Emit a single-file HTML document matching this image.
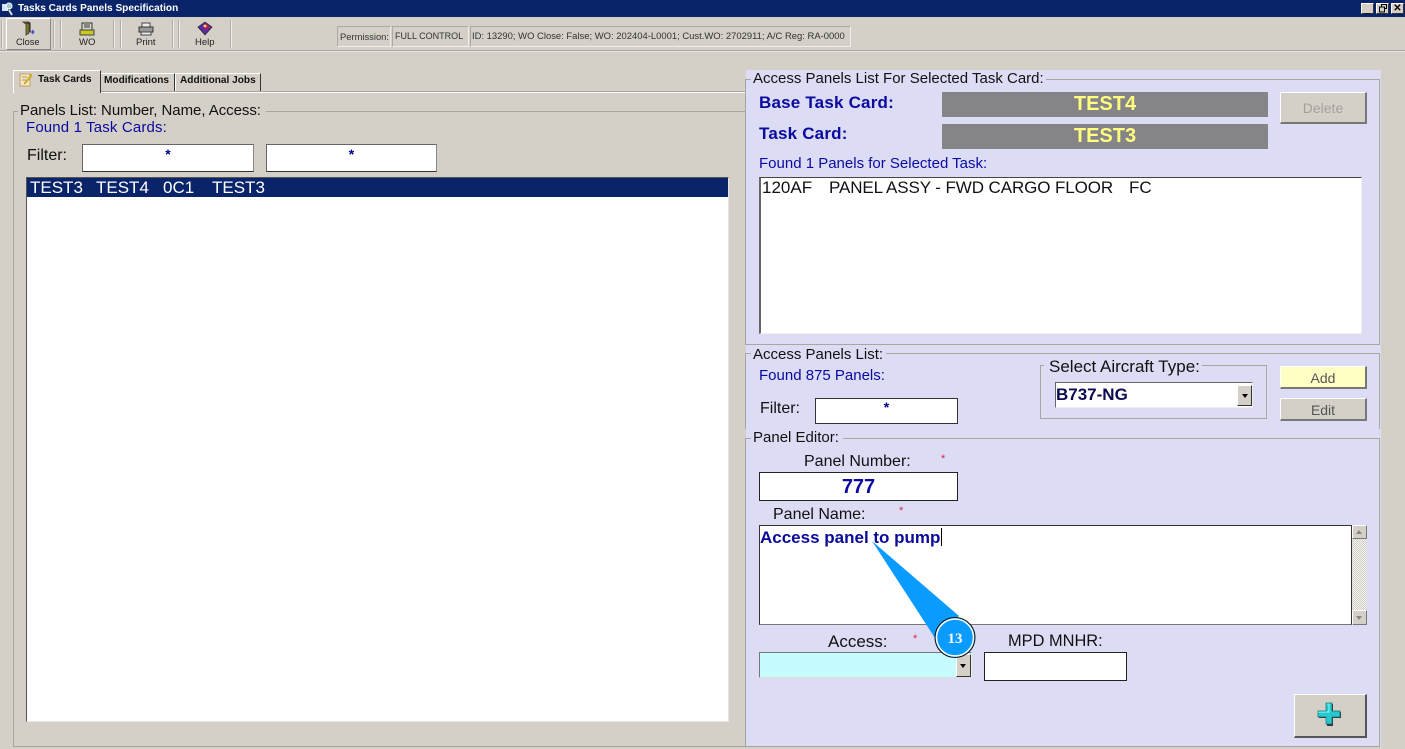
<!DOCTYPE html>
<html><head><meta charset="utf-8"><title>Tasks Cards Panels Specification</title>
<style>
html,body{margin:0;padding:0}
body{width:1405px;height:749px;overflow:hidden;position:relative;background:#d4d0c8;font-family:"Liberation Sans",sans-serif;color:#000}
div{position:absolute;box-sizing:border-box}
.t{white-space:nowrap;line-height:1}
.b{color:#0a0aa0}
.sm{font-size:9.5px;color:#222}
.box{background:#fff;border:1px solid #222;}
.in{background:#fff;border:1px solid #666;border-right-color:#888;border-bottom-color:#333;text-align:center;color:#00008b;font-weight:bold;font-size:14px;line-height:18px}
.btn{background:#d4d0c8;border-top:1px solid #fff;border-left:1px solid #fff;border-right:2px solid #777;border-bottom:2px solid #777;text-align:center;font-size:14px;color:#444}
.sep{width:1px;background:#b0ada6;border-right:1px solid #eeece6;box-sizing:content-box;top:20px;height:28px}
.ln{background:#a9a69f}
.gr{background:#858486;color:#ffff80;font-weight:bold;font-size:20px;text-align:center}
.cell{top:26px;height:21px;border:1px solid #f0eee8;border-top-color:#aaa;border-left-color:#aaa;font-size:9.5px;color:#333;line-height:19px;white-space:nowrap;padding-left:2px}
.win{top:3px;width:13px;height:11px;background:#d4d0c8;border-top:1px solid #fff;border-left:1px solid #fff;border-right:1px solid #333;border-bottom:1px solid #333;color:#000;font-size:10px;font-weight:bold;line-height:9px;text-align:center}
.red{color:#e02050;font-size:11px}
</style></head><body>

<!-- Title bar -->
<div style="left:0;top:0;width:1405px;height:17px;background:#0a246a"></div>
<svg style="position:absolute;left:1px;top:1px" width="14" height="15" viewBox="0 0 14 15"><rect x="1" y="3" width="6" height="7" fill="#d8e4f4"/><circle cx="8" cy="5" r="3" fill="#9cc" stroke="#fff"/><path d="M8 9l3 5" stroke="#ddd" stroke-width="2"/></svg>
<div class="t" style="left:18px;top:4px;font-size:10.1px;font-weight:bold;color:#fff">Tasks Cards Panels Specification</div>
<div class="win" style="left:1361px;line-height:11px">_</div>
<div class="win" style="left:1376px"><svg style="position:absolute;left:1px;top:0" width="10" height="9" viewBox="0 0 10 9"><path d="M3.500 2.500V.5h5v4H7M1.500 3h5v5h-5z" fill="none" stroke="#000"/><path d="M3 .5h6M1 3h6" stroke="#000"/></svg></div>
<div class="win" style="left:1391px">&#10005;</div>

<!-- Toolbar -->
<div style="left:0;top:50px;width:1405px;height:2px;background:#a9a69f;border-bottom:1px solid #e8e6e0"></div>
<div style="left:6px;top:18px;width:45px;height:32px;border-top:1px solid #fff;border-left:1px solid #fff;border-right:1px solid #888;border-bottom:1px solid #888"></div>
<div class="sep" style="left:1px"></div>
<div class="sep" style="left:53px"></div><div class="sep" style="left:60px"></div>
<div class="sep" style="left:113px"></div><div class="sep" style="left:120px"></div>
<div class="sep" style="left:172px"></div><div class="sep" style="left:178px"></div>
<div class="sep" style="left:230px"></div>

<svg style="position:absolute;left:21px;top:21px" width="14" height="15" viewBox="0 0 14 15"><path d="M2 1h6v11l-3 2V3z" fill="#8a7a20" stroke="#333" stroke-width=".8"/><path d="M5 2h4v9" fill="none" stroke="#222"/><path d="M9 11h4M11 9l2 2-2 2" stroke="#2040c0" fill="none"/></svg>
<div class="t sm" style="left:16px;top:38px;font-size:9.200px">Close</div>
<svg style="position:absolute;left:79px;top:21px" width="16" height="15" viewBox="0 0 16 15"><rect x="3" y="2" width="10" height="7" fill="#d8d8c8" stroke="#333"/><path d="M5 4h6M5 6h6" stroke="#333"/><rect x="1" y="9" width="14" height="5" fill="#c8c820" stroke="#444"/></svg>
<div class="t sm" style="left:79px;top:38px">WO</div>
<svg style="position:absolute;left:138px;top:21px" width="16" height="15" viewBox="0 0 16 15"><rect x="4" y="2" width="8" height="4" fill="#eee" stroke="#444"/><rect x="1" y="6" width="14" height="5" fill="#999" stroke="#333"/><rect x="3" y="11" width="10" height="3" fill="#eee" stroke="#444"/></svg>
<div class="t sm" style="left:136px;top:38px">Print</div>
<svg style="position:absolute;left:197px;top:21px" width="16" height="15" viewBox="0 0 16 15"><path d="M1 6l7-5 7 5-7 8z" fill="#5a2aa0" stroke="#222" stroke-width=".7"/><path d="M8 2l5 4-5 3z" fill="#c02040"/><circle cx="8" cy="5" r="1.400" fill="#ffe060"/></svg>
<div class="t sm" style="left:195px;top:38px">Help</div>

<div class="cell" style="left:337px;width:54px;font-size:9.400px">Permission:</div>
<div class="cell" style="left:392px;width:77px;font-size:9px">FULL CONTROL</div>
<div class="cell" style="left:470px;width:381px;font-size:9.450px;padding-left:1px">ID: 13290; WO Close: False; WO: 202404-L0001; Cust.WO: 2702911; A/C Reg: RA-0000</div>

<!-- Tabs -->
<div class="ln" style="left:13px;top:91px;width:733px;height:1px"></div>
<div style="left:13px;top:92px;width:733px;height:1px;background:#fff"></div>
<div style="left:13px;top:70px;width:88px;height:23px;background:#d4d0c8;border-top:1px solid #fff;border-left:1px solid #fff;border-right:1px solid #333"></div>
<div style="left:101px;top:73px;width:74px;height:18px;border-top:1px solid #fff;border-right:1px solid #333"></div>
<div style="left:175px;top:73px;width:86px;height:18px;border-top:1px solid #fff;border-left:1px solid #fff;border-right:1px solid #333"></div>
<svg style="position:absolute;left:19px;top:72px" width="14" height="15" viewBox="0 0 14 15"><path d="M1 2h10v12H1z" fill="#f4e8c0" stroke="#c0a060"/><path d="M3 5h5M3 8h4" stroke="#b09060"/><path d="M12 2L6 10l-1 2 2-1 6-7z" fill="#e8c020" stroke="#a08020" stroke-width=".5"/></svg>
<div class="t" style="left:38px;top:75px;font-size:10.100px;font-weight:bold;color:#111">Task Cards</div>
<div class="t" style="left:104px;top:76px;font-size:10.100px;font-weight:bold;color:#111">Modifications</div>
<div class="t" style="left:180px;top:76px;font-size:10.100px;font-weight:bold;color:#111">Additional Jobs</div>

<!-- Left group -->
<div class="ln" style="left:13px;top:111px;width:5px;height:1px"></div>
<div class="ln" style="left:266px;top:111px;width:479px;height:1px"></div>
<div class="ln" style="left:13px;top:111px;width:1px;height:636px"></div>
<div class="ln" style="left:13px;top:746px;width:733px;height:1px"></div>
<div class="t" style="left:20px;top:103px;font-size:15px;letter-spacing:-.05px;color:#111">Panels List: Number, Name, Access:</div>
<div class="t b" style="left:26px;top:120px;font-size:15px;letter-spacing:.15px">Found 1 Task Cards:</div>
<div class="t" style="left:27px;top:148px;font-size:16px;color:#111">Filter:</div>
<div class="in" style="left:82px;top:144px;width:172px;height:28px">*</div>
<div class="in" style="left:266px;top:144px;width:171px;height:28px">*</div>
<div style="left:26px;top:177px;width:703px;height:545px;background:#fff;border:1px solid #555;border-right-color:#e8e6e0;border-bottom-color:#e8e6e0"></div>
<div style="left:27px;top:178px;width:701px;height:19px;background:#0a246a"></div>
<div class="t" style="left:30px;top:179px;font-size:17px;color:#fff">TEST3</div>
<div class="t" style="left:96px;top:179px;font-size:17px;color:#fff">TEST4</div>
<div class="t" style="left:163px;top:179px;font-size:17px;color:#fff">0C1</div>
<div class="t" style="left:212px;top:179px;font-size:17px;color:#fff">TEST3</div>

<!-- Right panels -->
<div style="left:746px;top:70px;width:635px;height:677px;background:#dcdcf5"></div>

<div class="ln" style="left:745px;top:79px;width:6px;height:1px"></div>
<div class="ln" style="left:1046px;top:79px;width:334px;height:1px"></div>
<div class="ln" style="left:745px;top:79px;width:1px;height:266px"></div>
<div class="ln" style="left:1379px;top:79px;width:1px;height:266px"></div>
<div class="ln" style="left:745px;top:344px;width:635px;height:1px"></div>
<div class="t" style="left:753px;top:71px;font-size:15px;color:#111">Access Panels List For Selected Task Card:</div>
<div class="t b" style="left:759px;top:94px;font-size:17px;font-weight:bold;letter-spacing:.2px">Base Task Card:</div>
<div class="t b" style="left:759px;top:125px;font-size:17px;font-weight:bold;letter-spacing:.2px">Task Card:</div>
<div class="gr" style="left:942px;top:92px;width:326px;height:25px;line-height:25px">TEST4</div>
<div class="gr" style="left:942px;top:124px;width:326px;height:25px;line-height:25px">TEST3</div>
<div class="btn" style="left:1280px;top:92px;width:87px;height:32px;line-height:31px;color:#a3a19b">Delete</div>
<div class="t b" style="left:759px;top:156px;font-size:15px">Found 1 Panels for Selected Task:</div>
<div style="left:759px;top:177px;width:603px;height:157px;background:#fff;border:1px solid #444;border-left:2px solid #666;border-right-color:#eee;border-bottom-color:#eee"></div>
<div class="t" style="left:762px;top:179px;font-size:17px;color:#111">120AF</div>
<div class="t" style="left:829px;top:179px;font-size:17px;letter-spacing:-.1px;color:#111">PANEL ASSY - FWD CARGO FLOOR</div>
<div class="t" style="left:1129px;top:179px;font-size:17px;color:#111">FC</div>

<div class="ln" style="left:745px;top:353px;width:6px;height:1px"></div>
<div class="ln" style="left:886px;top:353px;width:494px;height:1px"></div>
<div class="ln" style="left:745px;top:353px;width:1px;height:76px"></div>
<div class="ln" style="left:1379px;top:353px;width:1px;height:76px"></div>
<div class="t" style="left:753px;top:347px;font-size:15px;color:#111">Access Panels List:</div>
<div class="t b" style="left:759px;top:368px;font-size:15px">Found 875 Panels:</div>
<div class="t" style="left:760px;top:401px;font-size:16px;color:#111">Filter:</div>
<div class="box" style="left:815px;top:398px;width:143px;height:26px;text-align:center;color:#00008b;font-weight:bold;font-size:14px;line-height:17px;border-color:#333">*</div>
<div style="left:1040px;top:365px;width:227px;height:54px;border:1px solid #a9a69f"></div>
<div style="left:1044px;top:358px;width:158px;height:16px;background:#dcdcf5"></div>
<div class="t" style="left:1049px;top:358px;font-size:17px;color:#111">Select Aircraft Type:</div>
<div style="left:1055px;top:382px;width:198px;height:26px;background:#fff;border:1px solid #666;border-right-color:#eee;border-bottom-color:#eee"></div>
<div class="t" style="left:1056px;top:386px;font-size:17px;font-weight:bold;color:#0b0b50">B737-NG</div>
<div style="left:1237px;top:385px;width:15px;height:21px;background:#d4d0c8;border:1px solid #fff;border-right-color:#333;border-bottom-color:#333"></div>
<div style="left:1242px;top:394px;width:0;height:0;border:3px solid transparent;border-top:4px solid #000;border-bottom:0"></div>
<div class="btn" style="left:1280px;top:366px;width:87px;height:23px;line-height:23px;background:#ffffc4;color:#555">Add</div>
<div class="btn" style="left:1280px;top:398px;width:87px;height:23px;line-height:22px;color:#555">Edit</div>

<div class="ln" style="left:745px;top:438px;width:6px;height:1px"></div>
<div class="ln" style="left:843px;top:438px;width:537px;height:1px"></div>
<div class="ln" style="left:745px;top:438px;width:1px;height:309px"></div>
<div class="ln" style="left:1379px;top:438px;width:1px;height:309px"></div>
<div class="ln" style="left:745px;top:746px;width:635px;height:1px"></div>
<div class="t" style="left:753px;top:430px;font-size:15px;color:#111">Panel Editor:</div>
<div class="t" style="left:804px;top:454px;font-size:16px;color:#111">Panel Number:</div>
<div class="t red" style="left:941px;top:454px">*</div>
<div class="box" style="left:759px;top:472px;width:199px;height:29px;text-align:center;color:#0a0aa0;font-weight:bold;font-size:20px;line-height:28px">777</div>
<div class="t" style="left:773px;top:507px;font-size:16px;color:#111">Panel Name:</div>
<div class="t red" style="left:899px;top:506px">*</div>
<div style="left:759px;top:525px;width:593px;height:100px;background:#fff;border:1px solid #333;border-bottom-color:#777"></div>
<div class="t b" style="left:760px;top:529px;font-size:17px;font-weight:bold;color:#0a0a9a">Access panel to pump</div>
<div style="left:941px;top:528px;width:1px;height:18px;background:#000"></div>
<!-- scrollbar -->
<div style="left:1352px;top:525px;width:15px;height:100px;background:repeating-conic-gradient(#d4d0c8 0 25%,#f2f1ee 0 50%) 0 0/2px 2px"></div>
<div class="btn" style="left:1352px;top:525px;width:15px;height:14px;border-right-width:1px;border-bottom-width:1px"></div>
<div style="left:1356px;top:530px;width:0;height:0;border:3.5px solid transparent;border-bottom:4px solid #8a8880;border-top:0"></div>
<div class="btn" style="left:1352px;top:610px;width:15px;height:15px;border-right-width:1px;border-bottom-width:1px"></div>
<div style="left:1356px;top:616px;width:0;height:0;border:3.5px solid transparent;border-top:4px solid #8a8880;border-bottom:0"></div>

<div class="t" style="left:828px;top:633px;font-size:17px;color:#111">Access:</div>
<div class="t red" style="left:913px;top:634px">*</div>
<div class="t" style="left:1008px;top:633px;font-size:16.400px;color:#111">MPD MNHR:</div>
<div style="left:759px;top:652px;width:213px;height:26px;background:#c4fcff;border:1px solid #777;border-right-color:#eee;border-bottom-color:#ddd"></div>
<div style="left:956px;top:654px;width:15px;height:23px;background:#d4d0c8;border:1px solid #fff;border-right-color:#333;border-bottom-color:#333"></div>
<div style="left:960px;top:664px;width:0;height:0;border:3px solid transparent;border-top:4px solid #000;border-bottom:0"></div>
<div class="box" style="left:984px;top:652px;width:143px;height:29px"></div>
<div class="btn" style="left:1294px;top:694px;width:73px;height:44px;border-right-color:#555;border-bottom-color:#555"></div>
<svg style="position:absolute;left:1317px;top:701px" width="25" height="25" viewBox="0 0 25 25"><path d="M9 2h6v8h8v6h-8v8H9v-8H1v-6h8z" fill="#222" transform="translate(1 1)" opacity=".9"/><path d="M9 2h6v8h8v6h-8v7H9v-7H1v-6h8z" fill="#28c8cc" stroke="#0f6e78" stroke-width=".7"/><path d="M10 3h2v8H2v1" fill="none" stroke="#7ff" stroke-width="1"/></svg>

<!-- Callout -->
<svg style="position:absolute;left:860px;top:530px" width="125" height="140" viewBox="0 0 125 140">
<polygon points="12,11 99,86 75,108" fill="#0a9bff"/>
<circle cx="95" cy="107.500" r="20" fill="#0a9bff" stroke="#111" stroke-width="1"/>
<circle cx="95" cy="107.500" r="18.500" fill="none" stroke="#fff" stroke-width="1.500"/>
<text x="95" y="113" font-family="Liberation Serif,serif" font-size="15" font-weight="bold" fill="#fff" text-anchor="middle">13</text>
</svg>
</body></html>
